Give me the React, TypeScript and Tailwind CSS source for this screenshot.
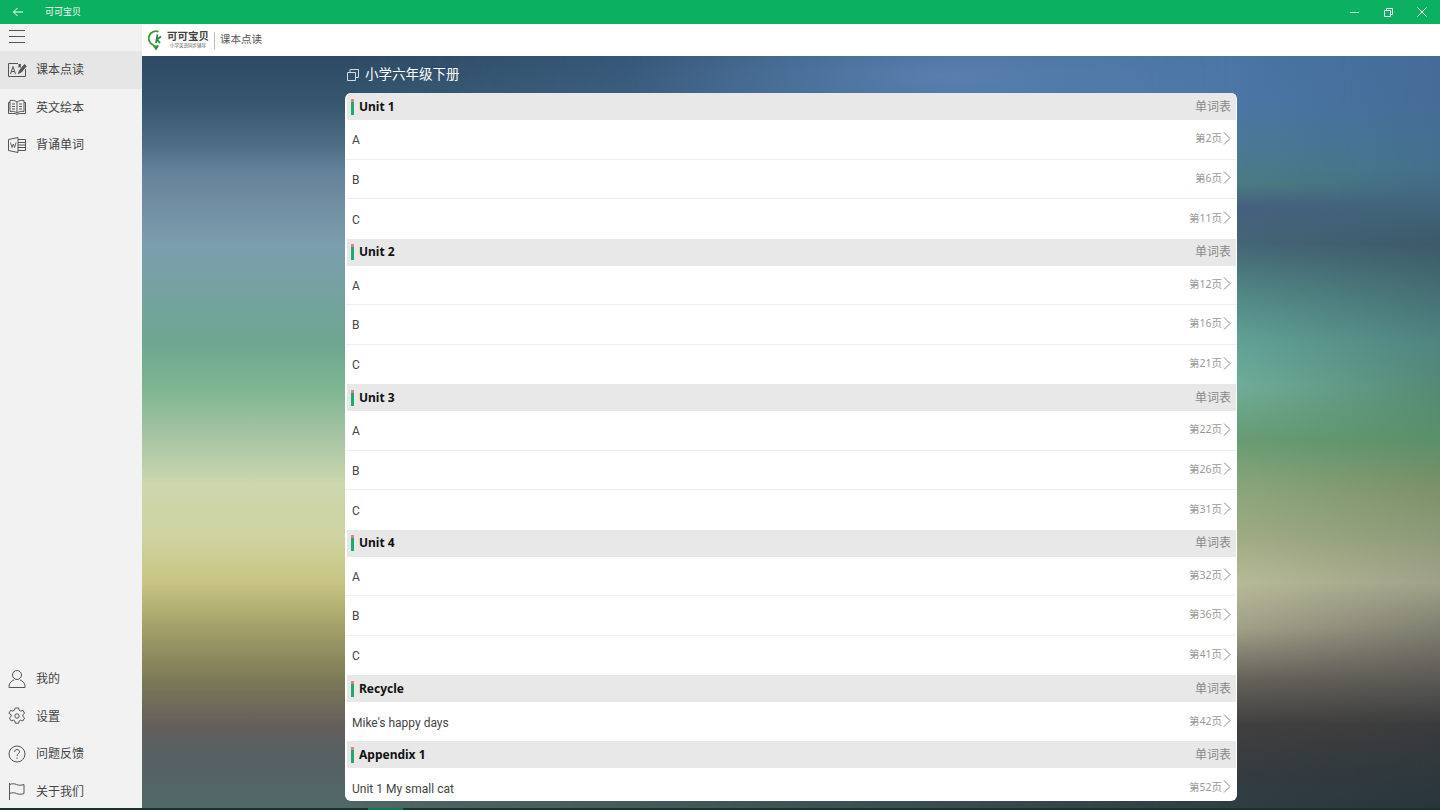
const units = [
  { name: "Unit 1", items: [["A", "第2页"], ["B", "第6页"], ["C", "第11页"]] },
  { name: "Unit 2", items: [["A", "第12页"], ["B", "第16页"], ["C", "第21页"]] },
  { name: "Unit 3", items: [["A", "第22页"], ["B", "第26页"], ["C", "第31页"]] },
  { name: "Unit 4", items: [["A", "第32页"], ["B", "第36页"], ["C", "第41页"]] },
  { name: "Recycle", items: [["Mike's happy days", "第42页"]] },
  { name: "Appendix 1", items: [["Unit 1 My small cat", "第52页"]] },
];

function ReadIcon() {
  return (
    <svg width="20" height="18" viewBox="0 0 20 18" fill="none" stroke="#555" strokeWidth="1">
      <path d="M11 2.500H1.500v13h17V8" />
      <path d="M3.500 13 6 5.500 8.500 13M4.500 10.500h3" />
      <path d="M11.500 12.500l1-3 5-6 1.800 1.600-5 6-2.800 1.400z" fill="#555" />
      <path d="M11.500 3v4l1.200-1 1.200 1V3" fill="#555" stroke="none" />
    </svg>
  );
}

function BookIcon() {
  return (
    <svg width="20" height="18" viewBox="0 0 20 18" fill="none" stroke="#555" strokeWidth="1">
      <path d="M10 4C8 2.500 5.500 2 3 2.500v11c2.500-.5 5 0 7 1.500 2-1.500 4.500-2 7-1.500v-11C14.500 2 12 2.500 10 4zM10 4v11" />
      <path d="M3 4.500H1.500v11H8l2 1 2-1h6.500v-11H17" />
      <path d="M5 6h3M5 8.500h3M5 11h3M12 6h3M12 8.500h3M12 11h3" />
    </svg>
  );
}

function WordIcon() {
  return (
    <svg width="20" height="18" viewBox="0 0 20 18" fill="none" stroke="#555" strokeWidth="1">
      <path d="M1.500 3.500 11 1.500v15l-9.500-2z" />
      <path d="M11 3.500h7.500v11H11M11 6.500h7.500M11 9h7.500M11 11.500h7.500" />
      <path d="M3.500 6.500 5 11.500l1.300-3.500 1.300 3.500 1.400-5" strokeWidth="0.900" />
    </svg>
  );
}

function UserIcon() {
  return (
    <svg width="18" height="20" viewBox="0 0 18 20" fill="none" stroke="#555" strokeWidth="1">
      <circle cx="9" cy="6" r="4.500" />
      <path d="M1 18.500v-1.500c0-3 3-5.500 5-6M17 18.500v-1.500c0-3-3-5.500-5-6M1 18.500h16" />
    </svg>
  );
}

function GearIcon() {
  return (
    <svg width="18" height="18" viewBox="0 0 18 18" fill="none" stroke="#555" strokeWidth="1">
      <circle cx="9" cy="9" r="2.200" />
      <path d="M7.300 1h3.400l.5 2.300 1.500.8 2.200-.8 1.700 3-1.800 1.500v1.600l1.800 1.500-1.700 3-2.200-.8-1.500.8-.5 2.300H7.300l-.5-2.300-1.500-.8-2.200.8-1.700-3 1.800-1.500V7.800L.9 6.300l1.700-3 2.200.8 1.500-.8z" />
    </svg>
  );
}

function HelpIcon() {
  return (
    <svg width="18" height="18" viewBox="0 0 18 18" fill="none" stroke="#555" strokeWidth="1">
      <circle cx="9" cy="9" r="8" />
      <path d="M6.500 7c0-1.500 1.100-2.500 2.500-2.500s2.500 1 2.500 2.300c0 1.900-2.500 2-2.500 4.200" />
      <path d="M9 12.500v1.300" />
    </svg>
  );
}

function FlagIcon() {
  return (
    <svg width="18" height="18" viewBox="0 0 18 18" fill="none" stroke="#555" strokeWidth="1">
      <path d="M1.500 1v17" />
      <path d="M1.500 2.500c2.500-1 5-1 7 0s4.500 1 7.500 0v9c-3 1-5.500 1-7.500 0s-4.500-1-7 0" />
    </svg>
  );
}

function Logo() {
  return (
    <svg width="17" height="20" viewBox="0 0 17 20" fill="none">
      <path d="M10.500 1.600A7 7 0 0 0 5.500 15.200L8 19l2.200-3.500" stroke="#3f9a3a" strokeWidth="1.800" />
      <path d="M6 15.500h4.500L8 19.500z" fill="#2f8f34" />
      <path d="M9.500 4.500 8 13M13 6.500 9 9.500l3 3.500" stroke="#1f8a3a" strokeWidth="1.700" />
    </svg>
  );
}

function NavItem({ icon, label, active }: { icon: React.ReactNode; label: string; active?: boolean }) {
  return (
    <div className={`flex h-[37.5px] items-center ${active ? "bg-[#e6e6e6]" : ""}`}>
      <div className="flex w-[36px] justify-center pr-[2px]">{icon}</div>
      <span className="pt-[1px] text-[12px] text-[#444]">{label}</span>
    </div>
  );
}

function Row({ title, page, single, last }: { title: string; page: string; single: boolean; last: boolean }) {
  return (
    <div className={`mx-[1px] flex items-center justify-between pl-[6px] pr-[5px] pt-[2px] ${single ? "h-[39px]" : "h-[39.5px]"} ${last ? "" : "border-b border-[#eeeeee]"}`}>
      <span className="font-['Roboto','Noto_Sans_CJK_SC',sans-serif] text-[12px] text-[#444]">{title}</span>
      <div className="mb-[2px] flex items-center gap-[1px]">
        <span className="text-[10.5px] text-[#999]">{page}</span>
        <svg width="8" height="13" viewBox="0 0 8 13" fill="none" stroke="#888" strokeWidth="1" className="-mt-[2px]">
          <path d="M1 .5l6 6-6 6" />
        </svg>
      </div>
    </div>
  );
}

export default function App() {
  return (
    <div className="flex h-screen w-full flex-col overflow-hidden bg-[#17352f] font-['Noto_Sans','Noto_Sans_CJK_SC',sans-serif]">
      {/* title bar */}
      <div className="flex h-6 shrink-0 items-center justify-between bg-[#0bb061] text-white">
        <div className="flex items-center">
          <svg width="10" height="10" viewBox="0 0 10 10" fill="none" stroke="#fff" strokeWidth="1" className="ml-[13px]">
            <path d="M.5 5h9.500M4.500 1 .5 5l4 4" />
          </svg>
          <span className="ml-[22px] text-[9px]">可可宝贝</span>
        </div>
        <div className="flex items-center">
          <div className="flex w-[34px] justify-center">
            <div className="h-px w-[9px] bg-white/80" />
          </div>
          <div className="flex w-[34px] justify-center">
            <svg width="9" height="9" viewBox="0 0 9 9" fill="none" stroke="#fff" strokeWidth="1">
              <path d="M.5 2.500h6v6h-6zM2.500 2.500v-2h6v6h-2" />
            </svg>
          </div>
          <div className="flex w-[34px] justify-center">
            <svg width="10" height="10" viewBox="0 0 10 10" fill="none" stroke="#fff" strokeWidth="1">
              <path d="M.5.5l9 9M9.500.5l-9 9" />
            </svg>
          </div>
          <div className="w-px" />
        </div>
      </div>

      <div className="flex min-h-0 flex-1">
        {/* sidebar */}
        <aside className="flex w-[142px] shrink-0 flex-col justify-between bg-[#f2f2f2]">
          <div>
            <div className="flex h-[27px] flex-col justify-center gap-[5px] pb-[2px] pl-[9px]">
              <div className="h-px w-4 bg-[#555]" />
              <div className="h-px w-4 bg-[#555]" />
              <div className="h-px w-4 bg-[#555]" />
            </div>
            <NavItem active icon={<ReadIcon />} label="课本点读" />
            <NavItem icon={<BookIcon />} label="英文绘本" />
            <NavItem icon={<WordIcon />} label="背诵单词" />
          </div>
          <div className="-mb-[2px]">
            <NavItem icon={<UserIcon />} label="我的" />
            <NavItem icon={<GearIcon />} label="设置" />
            <NavItem icon={<HelpIcon />} label="问题反馈" />
            <NavItem icon={<FlagIcon />} label="关于我们" />
          </div>
        </aside>

        <div className="flex min-w-0 flex-1 flex-col">
          {/* app header */}
          <header className="flex h-8 shrink-0 items-center bg-white pl-[6px]">
            <Logo />
            <div className="-mt-[2px] ml-[2px] flex flex-col items-center leading-none">
              <span className="text-[10.5px] font-bold leading-[12px] text-[#444]">可可宝贝</span>
              <span className="text-[4.5px] leading-[6px] text-[#555]">小学英语同步辅导</span>
            </div>
            <div className="ml-[5px] h-[17px] w-px bg-[#bbb]" />
            <span className="ml-[5px] text-[10.5px] text-[#555]">课本点读</span>
          </header>

          {/* content with blurred photo behind it */}
          <main className="relative min-h-0 flex-1 overflow-hidden">
            <div className="absolute inset-0 bg-[linear-gradient(to_bottom,#2e4a64_0%,#35566e_6%,#4f6d84_12%,#62809a_15%,#6f8ca0_19%,#7c9dae_25%,#74a3a0_32%,#6da690_38%,#7db592_44%,#a9c5a4_51%,#ccd7ae_57%,#cfd3a0_64%,#c8c583_70%,#a3a068_76%,#7c7958_83%,#645e5c_89%,#586064_93%,#4f6868_100%)]" />
            <div className="absolute inset-0 bg-[linear-gradient(to_bottom,#4a74a4_0%,#4b76a5_6%,#4a7a96_12%,#4c7c80_17%,#466080_20%,#456676_25%,#538a86_32%,#62a296_38%,#70ae9a_44%,#699c74_51%,#89a67a_57%,#a0ac84_64%,#b8bb98_70%,#a3a38a_76%,#65625a_83%,#41403f_89%,#343c40_96%,#2d3f44_100%)] [mask-image:linear-gradient(to_right,transparent_16%,black_84%)]" />
            <div className="absolute inset-0 bg-[linear-gradient(to_bottom,#456c98_0%,#456c98_6%,#44708c_15%,#3c5a68_25%,#4f8480_38%,#5a9068_51%,#7a9068_57%,#9fa288_70%,#6a6860_80%,#3a3b3c_89%,#28363c_100%)] [mask-image:linear-gradient(to_right,transparent_84%,black_100%)]" />
            <div className="absolute inset-0 bg-[radial-gradient(ellipse_320px_70px_at_62%_20px,rgba(110,150,205,0.5),transparent)]" />

            <div className="relative ml-[203px] w-[892px]">
              <div className="flex h-[37px] items-center">
                <svg width="12" height="12" viewBox="0 0 12 12" fill="none" stroke="#fff" strokeWidth="1" className="ml-[2px] opacity-80">
                  <path d="M.5 3.500h8v8h-8zM3 3.500v-3h8.500v8H8.500" />
                </svg>
                <span className="ml-[6px] text-[13.5px] text-white">小学六年级下册</span>
              </div>

              <div className="h-[708px] overflow-hidden rounded-md bg-white">
                {units.map((unit) => (
                  <div key={unit.name}>
                    <div className="ml-[2px] mr-[1px] flex h-[27px] items-center justify-between bg-[#e8e8e8] pl-[4px] pr-[5px]">
                      <div className="flex items-center gap-[5px]">
                        <div className="flex h-[16px] w-[3px] flex-col">
                          <div className="h-[3px] bg-[#ea7f7f]" />
                          <div className="flex-1 bg-[#1fa971]" />
                        </div>
                        <span className="text-[12px] font-bold text-[#111]">{unit.name}</span>
                      </div>
                      <span className="text-[12px] text-[#888]">单词表</span>
                    </div>
                    {unit.items.map(([title, page], i) => (
                      <Row key={title} title={title} page={page} single={unit.items.length === 1} last={i === unit.items.length - 1} />
                    ))}
                  </div>
                ))}
              </div>
            </div>
          </main>
        </div>
      </div>

      {/* sliver at the very bottom of the window */}
      <div className="h-[2px] shrink-0">
        <div className="ml-[368px] h-[2px] w-[35px] bg-[#0c7a55]" />
      </div>
    </div>
  );
}
